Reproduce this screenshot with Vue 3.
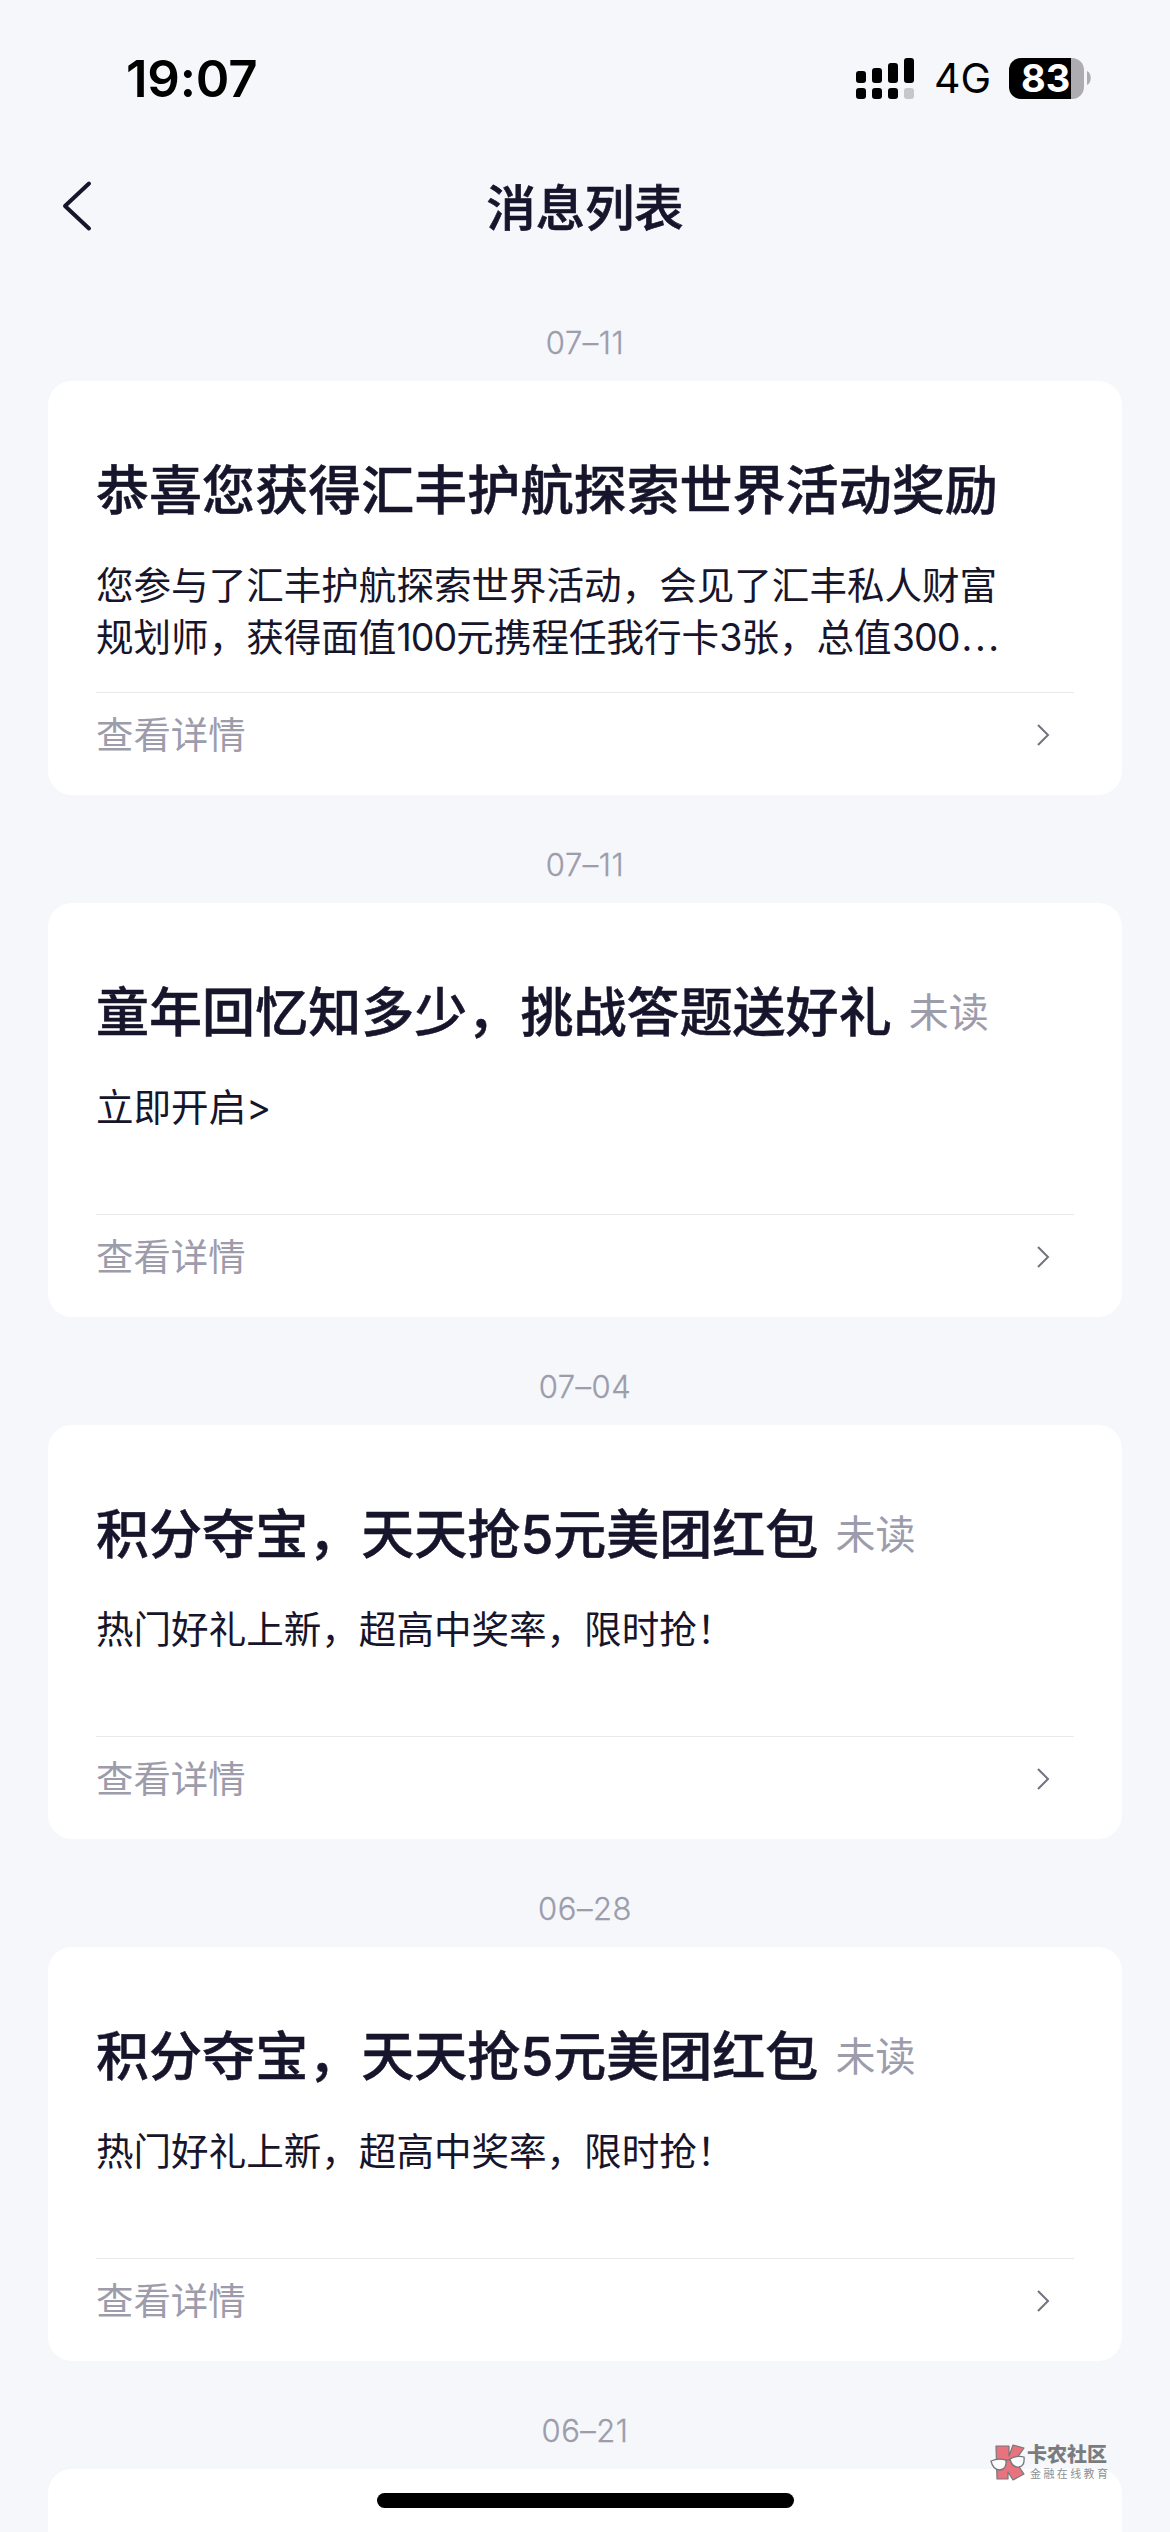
<script setup>
const messages = [
  {
    date: '07–11',
    title: '恭喜您获得汇丰护航探索世界活动奖励',
    lines: ['您参与了汇丰护航探索世界活动，会见了汇丰私人财富', '规划师，获得面值100元携程任我行卡3张，总值300...'],
    unread: false,
  },
  { date: '07–11', title: '童年回忆知多少，挑战答题送好礼', lines: ['立即开启>'], unread: true },
  { date: '07–04', title: '积分夺宝，天天抢5元美团红包', lines: ['热门好礼上新，超高中奖率，限时抢！'], unread: true },
  { date: '06–28', title: '积分夺宝，天天抢5元美团红包', lines: ['热门好礼上新，超高中奖率，限时抢！'], unread: true },
]

// Digits and the trailing dots are tracked differently from the Chinese text.
const runs = (line) => line.split(/(\d+|\.{3})/).filter(Boolean)
const runClass = (run) => (/^\d/.test(run) ? 'digits' : run === '...' ? 'dots' : null)
</script>

<template>
  <div class="screen">
    <header class="status">
      <span class="time">19:07</span>
      <div class="indicators">
        <svg class="signal" width="58" height="41" viewBox="0 0 58 41">
          <rect x="0" y="13" width="10" height="12" rx="3" />
          <rect x="16" y="10" width="10" height="15" rx="3" />
          <rect x="32" y="5" width="10" height="20" rx="3" />
          <rect x="48" y="0" width="10" height="25" rx="3" />
          <rect x="0" y="30" width="10" height="11" rx="3" />
          <rect x="16" y="30" width="10" height="11" rx="3" />
          <rect x="32" y="30" width="10" height="11" rx="3" />
          <rect x="48" y="30" width="10" height="11" rx="3" fill="#c6c7ca" />
        </svg>
        <span class="network">4G</span>
        <div class="battery"><span class="level">83</span></div>
        <svg class="nub" width="4" height="14" viewBox="0 0 4 14"><path d="M0 0C5 2 5 12 0 14Z" fill="#adadaf" /></svg>
      </div>
    </header>

    <nav class="nav">
      <svg class="back" width="30" height="52" viewBox="0 0 30 52">
        <path d="M27 3.5 3 26l24 22.5" fill="none" stroke="#17152b" stroke-width="4" stroke-linecap="round" stroke-linejoin="round" />
      </svg>
      <h1 class="heading">消息列表</h1>
    </nav>

    <main class="list">
      <section v-for="(m, i) in messages" :key="i" class="group">
        <div class="date">{{ m.date }}</div>
        <article class="card">
          <div class="title-row">
            <h2 class="title">{{ m.title }}</h2>
            <span v-if="m.unread" class="unread">未读</span>
          </div>
          <div class="body">
            <p v-for="line in m.lines" :key="line" class="line"><span v-for="(run, r) in runs(line)" :key="r" :class="runClass(run)">{{ run }}</span></p>
          </div>
          <div class="footer">
            <span>查看详情</span>
            <svg class="chevron" width="14" height="24" viewBox="0 0 14 24">
              <path d="M2 2l10 10L2 22" fill="none" stroke="#74727f" stroke-width="2" />
            </svg>
          </div>
        </article>
      </section>
      <section class="group">
        <div class="date">06–21</div>
        <article class="card"></article>
      </section>
    </main>

    <div class="watermark">
      <svg width="36" height="37" viewBox="0 0 36 37">
        <g fill="#e8737e" stroke="#77777b" stroke-width="1.2" stroke-linejoin="round">
          <path d="M6 2h13v10L23 1l11 3-9 13 9 13-11 6-5-8v7H7z" />
        </g>
        <g fill="#fafbfd" stroke="#77777b" stroke-width="1.3">
          <path d="M1 17q7-3 15-1 1 9-6 10-7 0-9-9z" />
          <path d="M20 15q7-4 14-2 1 9-5 10-7 1-9-8z" />
          <path d="M16 17q2-2 4-1" fill="none" />
        </g>
      </svg>
      <div class="mark-text">
        <span class="mark-name">卡农社区</span>
        <span class="mark-sub">金融在线教育</span>
      </div>
    </div>
    <div class="home-bar"></div>
  </div>
</template>

<style>
body {
  margin: 0;
  background: #f5f7fb;
}
</style>

<style scoped>
.screen {
  position: relative;
  width: 1170px;
  height: 2532px;
  overflow: hidden;
  background: #f5f7fb;
  color: #17152b;
  font-family: Inter, "Noto Sans CJK SC", sans-serif;
}
h1, h2, p {
  margin: 0;
}
.status {
  height: 156px;
  box-sizing: border-box;
  padding: 0 79px 0 126px;
  display: flex;
  align-items: center;
  justify-content: space-between;
  color: #000;
}
.time {
  font-size: 51px;
  font-weight: 600;
  letter-spacing: -0.2px;
}
.indicators {
  display: flex;
  align-items: center;
}
.network {
  width: 75px;
  padding-left: 20px;
  font-size: 41px;
  line-height: 41px;
}
.battery {
  width: 75px;
  height: 41px;
  border-radius: 12px;
  background: linear-gradient(90deg, #000 62px, #adadaf 62px);
  display: flex;
  align-items: center;
}
.level {
  padding-left: 12px;
  color: #fff;
  font-size: 38px;
  font-weight: 700;
  line-height: 41px;
}
.nub {
  margin-left: 3px;
}
.nav {
  height: 100px;
  padding: 0 62px;
  display: grid;
  grid-template-columns: 60px 1fr 60px;
  align-items: center;
}
.heading {
  padding-top: 4px;
  text-align: center;
  font-size: 49.3px;
  font-weight: 500;
  line-height: 60px;
  -webkit-text-stroke: 0.7px currentColor;
}
.list {
  padding: 17px 48px 0;
}
.group {
  height: 522px;
}
.date {
  height: 108px;
  box-sizing: border-box;
  padding-top: 50px;
  text-align: center;
  font-size: 31px;
  line-height: 40px;
  font-weight: 300;
  letter-spacing: 0.5px;
  -webkit-text-stroke: 0.3px currentColor;
  color: #9c9cab;
}
.card {
  height: 414px;
  box-sizing: border-box;
  padding: 73px 48px 0;
  border-radius: 24px;
  background: #fff;
}
.title-row {
  height: 74px;
  display: flex;
  align-items: center;
  gap: 17px;
}
.title {
  font-size: 53.05px;
  font-weight: 500;
  line-height: 74px;
  white-space: nowrap;
  -webkit-text-stroke: 0.5px currentColor;
}
.unread {
  font-size: 40px;
  line-height: 74px;
  font-weight: 400;
  color: #9c9cab;
}
.body {
  height: 133px;
  padding-top: 32px;
  box-sizing: border-box;
}
.line {
  height: 52px;
  font-size: 37.55px;
  line-height: 52px;
  white-space: nowrap;
}
.digits {
  letter-spacing: -0.9px;
}
.dots {
  padding-left: 2px;
  letter-spacing: 2.6px;
}
.footer {
  margin-top: 31px;
  height: 86px;
  border-top: 1px solid #e8e8ed;
  padding-right: 24px;
  display: flex;
  align-items: center;
  justify-content: space-between;
  font-size: 37.4px;
  line-height: 52px;
  color: #9c9cab;
}
.chevron {
  margin-bottom: 2px;
}
.watermark {
  position: absolute;
  left: 990px;
  top: 2444px;
  display: flex;
}
.mark-text {
  display: flex;
  flex-direction: column;
  padding-left: 1px;
  color: #7b7c80;
}
.mark-name {
  font-size: 20px;
  font-weight: 900;
  line-height: 23px;
}
.mark-sub {
  padding: 1px 0 0 3px;
  font-size: 11px;
  line-height: 12px;
  letter-spacing: 2.4px;
  color: #8e8f93;
}
.home-bar {
  position: absolute;
  left: 377px;
  top: 2493px;
  width: 417px;
  height: 15px;
  border-radius: 8px;
  background: #000;
}
</style>
